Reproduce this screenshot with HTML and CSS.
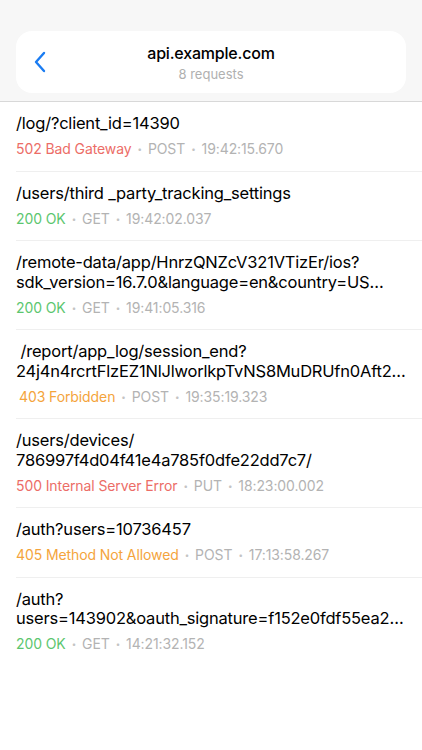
FILE: index.html
```html
<!DOCTYPE html>
<html>
<head>
<meta charset="utf-8">
<link rel="stylesheet" href="styles.css">
</head>
<body>
<header class="top">
  <div class="card">
    <button class="back" aria-label="Back">
      <svg width="14" height="22" viewBox="0 0 14 22"><path d="M11 2 L3 11 L11 20" fill="none" stroke="#1a7cf2" stroke-width="2.4" stroke-linecap="round" stroke-linejoin="round"/></svg>
    </button>
    <div class="heading">
      <div class="host">api.example.com</div>
      <div class="count">8 requests</div>
    </div>
  </div>
</header>
<ul class="list">
  <li class="row">
    <div class="path"><span class="line">/log/?client_id=14390</span></div>
    <div class="meta"><span class="s-red">502 Bad Gateway</span><span class="dot">•</span>POST<span class="dot">•</span>19:42:15.670</div>
  </li>
  <li class="row">
    <div class="path"><span class="line">/users/third _party_tracking_settings</span></div>
    <div class="meta"><span class="s-green">200 OK</span><span class="dot">•</span>GET<span class="dot">•</span>19:42:02.037</div>
  </li>
  <li class="row">
    <div class="path"><span class="line">/remote-data/app/HnrzQNZcV321VTizEr/ios?</span><span class="line">sdk_version=16.7.0&amp;language=en&amp;country=US…</span></div>
    <div class="meta"><span class="s-green">200 OK</span><span class="dot">•</span>GET<span class="dot">•</span>19:41:05.316</div>
  </li>
  <li class="row">
    <div class="path"><span class="line">&nbsp;/report/app_log/session_end?</span><span class="line">24j4n4rcrtFlzEZ1NlJlworlkpTvNS8MuDRUfn0Aft2…</span></div>
    <div class="meta indent"><span class="s-orange">403 Forbidden</span><span class="dot">•</span>POST<span class="dot">•</span>19:35:19.323</div>
  </li>
  <li class="row">
    <div class="path"><span class="line">/users/devices/</span><span class="line">786997f4d04f41e4a785f0dfe22dd7c7/</span></div>
    <div class="meta"><span class="s-red">500 Internal Server Error</span><span class="dot">•</span>PUT<span class="dot">•</span>18:23:00.002</div>
  </li>
  <li class="row">
    <div class="path"><span class="line">/auth?users=10736457</span></div>
    <div class="meta"><span class="s-orange">405 Method Not Allowed</span><span class="dot">•</span>POST<span class="dot">•</span>17:13:58.267</div>
  </li>
  <li class="row last">
    <div class="path"><span class="line">/auth?</span><span class="line">users=143902&amp;oauth_signature=f152e0fdf55ea2…</span></div>
    <div class="meta"><span class="s-green">200 OK</span><span class="dot">•</span>GET<span class="dot">•</span>14:21:32.152</div>
  </li>
</ul>
</body>
</html>
```
FILE: styles.css
```css
* { box-sizing: border-box; }
html, body { margin: 0; padding: 0; background: #fff; }
body {
  font-family: Inter, "Liberation Sans", Arial, sans-serif;
  color: #000;
  width: 422px;
}
.top {
  background: #f7f7f7;
  padding: 31px 16px 8px;
  border-bottom: 1px solid #d8d8d8;
}
.card {
  background: #fff;
  border-radius: 16px;
  height: 62px;
  display: flex;
  align-items: center;
  position: relative;
}
.back {
  border: 0;
  background: none;
  padding: 0;
  margin-left: 17px;
  width: 14px;
  height: 22px;
  display: flex;
  align-items: center;
  justify-content: center;
}
.heading {
  position: absolute;
  left: 0; right: 0; top: 0; bottom: 0;
  display: flex;
  flex-direction: column;
  align-items: center;
  justify-content: center;
  pointer-events: none;
}
.host {
  font-size: 16px;
  font-weight: 500;
  line-height: 20px;
  letter-spacing: -0.2px;
}
.count {
  font-size: 13px;
  line-height: 16px;
  color: #b0b0b0;
  margin-top: 3px;
}
.list {
  list-style: none;
  margin: 0;
  padding: 0;
}
.row {
  margin-left: 16px;
  padding: 12px 16px 12.5px 0;
  border-bottom: 1px solid #efefef;
}
.row.last { border-bottom: 0; }
.path {
  font-size: 16.5px;
  line-height: 19.5px;
  letter-spacing: -0.2px;
}
.line {
  display: block;
  white-space: nowrap;
}
.meta {
  margin-top: 6.5px;
  font-size: 14px;
  line-height: 18px;
  color: #b3b3b3;
  letter-spacing: -0.1px;
}
.meta.indent { padding-left: 3px; }
.dot {
  font-size: 8px;
  margin: 0 6px;
  vertical-align: 2px;
  color: #c4c4c4;
}
.s-red { color: #ec6d67; }
.s-green { color: #5cc66f; }
.s-orange { color: #f4a43c; }
```
